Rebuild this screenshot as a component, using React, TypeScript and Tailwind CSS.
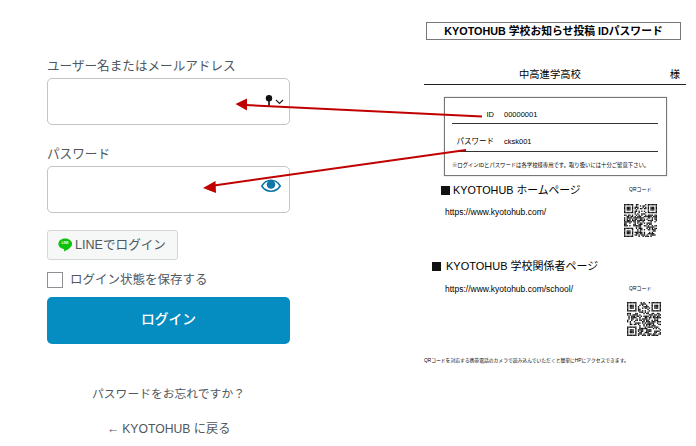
const FONT = "font-['Liberation_Sans','Noto_Sans_CJK_JP',sans-serif]";

function QR({ seed, size }: { seed: number; size: number }) {
  const n = 25;
  const cells: [number, number][] = [];
  const inFinder = (x: number, y: number, ox: number, oy: number) => x >= ox && x < ox + 8 && y >= oy && y < oy + 8;
  const finder = (x: number, y: number, ox: number, oy: number) => {
    const dx = x - ox, dy = y - oy;
    if (dx < 0 || dy < 0 || dx > 6 || dy > 6) return false;
    return dx === 0 || dy === 0 || dx === 6 || dy === 6 || (dx >= 2 && dx <= 4 && dy >= 2 && dy <= 4);
  };
  let s = seed;
  for (let y = 0; y < n; y++) {
    for (let x = 0; x < n; x++) {
      s = (s * 1103515245 + 12345) & 0x7fffffff;
      const reserved = inFinder(x, y, 0, 0) || inFinder(x, y, n - 8, 0) || inFinder(x, y, 0, n - 8);
      const on = reserved
        ? finder(x, y, 0, 0) || finder(x, y, n - 7, 0) || finder(x, y, 0, n - 7)
        : (s >> 12) % 100 < 50;
      if (on) cells.push([x, y]);
    }
  }
  return (
    <svg width={size} height={size} viewBox={`0 0 ${n} ${n}`} className="block blur-[0.3px]">
      {cells.map(([x, y]) => (
        <rect key={`${x}-${y}`} x={x} y={y} width="1" height="1" fill="#111" />
      ))}
    </svg>
  );
}

function LineIcon() {
  return (
    <span className="relative w-[14px] h-[14px] shrink-0">
      <svg width="14" height="14" viewBox="0 0 14 14" className="block">
        <path d="M7 .5C3.2.5.4 2.8.4 5.8c0 2.7 2.2 4.8 5.3 5.2.4.1.5.3.4.8l-.1 1.2c0 .3.2.4.5.3 1.6-.9 5.2-3 6.2-4.4.8-.9 1.4-1.9 1.4-3.1C14 2.8 10.800 .5 7 .5z" fill="#0cc20c" />
      </svg>
      <span className="absolute left-0 top-[3px] w-[14px] text-center text-[3px] leading-[5px] text-white font-bold">LINE</span>
    </span>
  );
}

function Key() {
  return (
    <svg width="8" height="12" viewBox="0 0 8 12" className="block">
      <circle cx="4" cy="3.300" r="3.200" fill="#111" />
      <rect x="3.200" y="5" width="1.600" height="7" fill="#111" />
    </svg>
  );
}

function Chevron() {
  return (
    <svg width="9" height="6" viewBox="0 0 9 6" className="block">
      <path d="M1 1l3.500 3.500L8 1" fill="none" stroke="#222" strokeWidth="1.200" />
    </svg>
  );
}

function Eye() {
  return (
    <svg width="20" height="13" viewBox="0 0 20 13" className="block">
      <path d="M.8 7C3 3.300 6.300 1.300 10 1.300s7 2 9.200 5.700C17 10.500 13.700 12.200 10 12.200S3 10.500.8 7z" fill="none" stroke="#0f76a8" strokeWidth="1.600" />
      <circle cx="10" cy="5.500" r="4.300" fill="#0f76a8" />
    </svg>
  );
}

function Arrows() {
  return (
    <svg width="696" height="446" viewBox="0 0 696 446" className="absolute left-0 top-0 pointer-events-none">
      <line x1="482" y1="116.500" x2="245" y2="105" stroke="#c00000" strokeWidth="2" />
      <polygon points="235.500,104 247,98.500 247,110.500" fill="#c00000" />
      <line x1="466" y1="150" x2="214" y2="185.500" stroke="#c00000" strokeWidth="2" />
      <polygon points="203,188 215.500,181 216,193" fill="#c00000" />
    </svg>
  );
}

export default function App() {
  return (
    <div className={`relative w-[696px] h-[446px] overflow-hidden bg-white flex ${FONT}`}>
      <div className="w-[243px] ml-[47px] shrink-0 flex flex-col text-[#50575e]">
        <div className="mt-[57px] h-[18px] text-[12.600px] leading-[18px]">ユーザー名またはメールアドレス</div>
        <div className="mt-[3px] h-[47px] rounded-[5px] border border-[#c3c4c7] bg-white flex justify-end pt-[16px] pr-[5px] gap-[2px]">
          <Key />
          <div className="pt-[4px]"><Chevron /></div>
        </div>
        <div className="mt-[20px] h-[18px] text-[12.600px] leading-[18px]">パスワード</div>
        <div className="mt-[3px] h-[47px] rounded-[5px] border border-[#c3c4c7] bg-white flex justify-end pt-[12px] pr-[8px]">
          <Eye />
        </div>
        <div className="mt-[17px] w-[131px] h-[30px] rounded-[3px] border border-[#d5d6d8] bg-[#f6f7f7] flex items-center pl-[10px] gap-[3px] text-[12.600px] text-[#50575e]">
          <LineIcon />
          <span>LINEでログイン</span>
        </div>
        <div className="mt-[12px] h-[16px] flex items-center gap-[7px]">
          <div className="w-[16px] h-[16px] border border-[#8c8f94] bg-white" />
          <span className="pt-[1px] text-[12.500px]">ログイン状態を保存する</span>
        </div>
        <div className="mt-[9px] h-[47px] rounded-[5px] bg-[#058cc0] flex items-center justify-center text-white text-[13.800px] font-medium">ログイン</div>
        <div className="mt-[41px] h-[18px] leading-[18px] text-center text-[11.800px]">パスワードをお忘れですか？</div>
        <div className="mt-[17px] h-[18px] leading-[18px] text-center text-[12.200px]">← KYOTOHUB に戻る</div>
      </div>

      <div className="ml-[134px] w-[262px] flex flex-col text-black">
        <div className="mt-[22px] ml-[2px] w-[255px] h-[18px] border border-[#777] flex items-center justify-center text-[10.800px] font-bold">KYOTOHUB 学校お知らせ投稿 IDパスワード</div>
        <div className="mt-[27px] h-[15px] ml-[95px] mr-[6px] flex justify-between text-[10.300px] leading-[15px]">
          <span>中高進学高校</span>
          <span>様</span>
        </div>
        <div className="mt-[2px] h-px bg-[#222]" />
        <div className="mt-[12px] ml-[20px] w-[223px] h-[79px] border border-[#777] shadow-[0_0_1px_#999] px-[7px] flex flex-col">
          <div className="mt-[10px] h-[14px] flex items-center text-[7.500px]">
            <span className="w-[42px] text-right">ID</span>
            <span className="ml-[10px]">00000001</span>
          </div>
          <div className="mt-[1px] h-px w-[206px] bg-[#333]" />
          <div className="mt-[11px] h-[14px] flex items-center text-[7.500px]">
            <span className="w-[42px] text-right">パスワード</span>
            <span className="ml-[10px]">cksk001</span>
          </div>
          <div className="mt-[2px] h-px w-[206px] bg-[#333]" />
          <div className="mt-[9px] text-[5.350px] leading-[8px] whitespace-nowrap">※ログインIDとパスワードは各学校様専用です。取り扱いには十分ご留意下さい。</div>
        </div>
        <div className="mt-[7px] ml-[17px] h-[14px] flex items-center">
          <div className="w-[9px] h-[9px] bg-[#111]" />
          <span className="ml-[3px] w-[176px] text-[10.800px] whitespace-nowrap">KYOTOHUB ホームページ</span>
          <span className="text-[5px]">QRコード</span>
        </div>
        <div className="ml-[21px] h-[33px] flex">
          <span className="w-[179px] mt-[9px] text-[8.500px] leading-[12px]">https://www.kyotohub.com/</span>
          <div className="mt-[7px]"><QR seed={7} size={33} /></div>
        </div>
        <div className="mt-[29px] ml-[8px] h-[14px] flex items-center text-[11px] whitespace-nowrap">
          <div className="w-[9px] h-[9px] bg-[#111]" />
          <span className="ml-[5px]">KYOTOHUB 学校関係者ページ</span>
        </div>
        <div className="ml-[21px] mt-[10px] h-[12px] flex items-center">
          <span className="w-[184px] text-[8.500px]">https://www.kyotohub.com/school/</span>
          <span className="text-[5px]">QRコード</span>
        </div>
        <div className="ml-[203px] mt-[7px]"><QR seed={23} size={34} /></div>
        <div className="mt-[21px] text-[4.800px] leading-[8px] whitespace-nowrap">QRコードを対応する携帯電話のカメラで読み込んでいただくと簡単にHPにアクセスできます。</div>
      </div>

      <Arrows />
    </div>
  );
}
